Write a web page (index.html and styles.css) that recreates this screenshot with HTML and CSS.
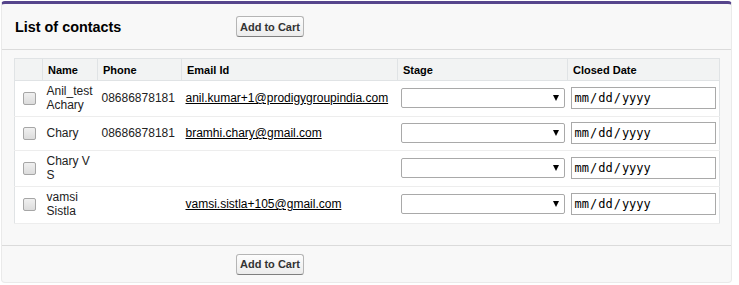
FILE: index.html
```html
<!DOCTYPE html>
<html lang="en">
<head>
  <meta charset="UTF-8" />
  <title>List of contacts</title>
  <link rel="stylesheet" href="styles.css">
</head>
<body>
  <div class="pb">
    <div class="pb-header">
      <h2 class="pb-title">List of contacts</h2>
      <button class="btn">Add to Cart</button>
    </div>

    <div class="pb-body">
      <table class="list">
        <colgroup>
          <col class="c-chk"><col class="c-name"><col class="c-phone">
          <col class="c-email"><col class="c-stage"><col class="c-date">
        </colgroup>
        <thead>
          <tr class="header-row">
            <th></th>
            <th>Name</th>
            <th>Phone</th>
            <th>Email Id</th>
            <th>Stage</th>
            <th>Closed Date</th>
          </tr>
        </thead>
        <tbody>
          <tr>
            <td class="chk"><input type="checkbox"></td>
            <td>Anil_test Achary</td>
            <td>08686878181</td>
            <td><a href="#">anil.kumar+1@prodigygroupindia.com</a></td>
            <td><span class="pick"><select></select></span></td>
            <td><div class="date">mm<span class="sep">/</span>dd<span class="sep">/</span>yyyy</div></td>
          </tr>
          <tr>
            <td class="chk"><input type="checkbox"></td>
            <td>Chary</td>
            <td>08686878181</td>
            <td><a href="#">bramhi.chary@gmail.com</a></td>
            <td><span class="pick"><select></select></span></td>
            <td><div class="date">mm<span class="sep">/</span>dd<span class="sep">/</span>yyyy</div></td>
          </tr>
          <tr>
            <td class="chk"><input type="checkbox"></td>
            <td>Chary V S</td>
            <td></td>
            <td></td>
            <td><span class="pick"><select></select></span></td>
            <td><div class="date">mm<span class="sep">/</span>dd<span class="sep">/</span>yyyy</div></td>
          </tr>
          <tr>
            <td class="chk"><input type="checkbox"></td>
            <td>vamsi Sistla</td>
            <td></td>
            <td><a href="#">vamsi.sistla+105@gmail.com</a></td>
            <td><span class="pick"><select></select></span></td>
            <td><div class="date">mm<span class="sep">/</span>dd<span class="sep">/</span>yyyy</div></td>
          </tr>
        </tbody>
      </table>
    </div>

    <div class="pb-footer">
      <button class="btn">Add to Cart</button>
    </div>
  </div>
</body>
</html>
```

FILE: styles.css
```css
* {
  box-sizing: border-box;
}
body {
  margin: 0;
  padding: 1px 0 0 1px;
  background: #fff;
  font-family: Arial, 'Liberation Sans', sans-serif;
  font-size: 12px;
  color: #222;
}
.pb {
  width: 731px;
  background: #f8f8f8;
  border: 1px solid #eaeaea;
  border-top: 3px solid #56458c;
  border-radius: 4px;
}
.pb-header {
  display: flex;
  align-items: center;
  height: 46px;
  border-bottom: 1px solid #dbdbdb;
}
.pb-title {
  margin: 0;
  width: 234px;
  padding-left: 13px;
  font-size: 14.4px;
  font-weight: bold;
  color: #000;
}
.btn {
  height: 21px;
  margin: 0;
  padding: 0 3px;
  font-family: Arial, 'Liberation Sans', sans-serif;
  font-size: 11px;
  font-weight: bold;
  color: #333;
  background: linear-gradient(#fdfdfd, #ececec);
  border: 1px solid #b5b5b5;
  border-bottom-color: #7f7f7f;
  border-radius: 3px;
}
.pb-body {
  padding: 8px 12px 21px;
}
.list {
  width: 705px;
  table-layout: fixed;
  border-collapse: collapse;
  background: #fff;
  border: 1px solid #e0e3e5;
}
.c-chk { width: 28px; }
.c-name { width: 55px; }
.c-phone { width: 84px; }
.c-email { width: 216px; }
.c-stage { width: 170px; }
.c-date { width: 152px; }
.header-row th {
  height: 22px;
  padding: 0 2px 0 5px;
  text-align: left;
  font-size: 11px;
  font-weight: bold;
  color: #000;
  background: #f2f3f3;
  border-left: 1px solid #e0e3e5;
  border-bottom: 1px solid #e0e3e5;
}
.header-row th:first-child {
  border-left: none;
}
.list td {
  padding: 3px 2px 4px 4px;
  line-height: 14px;
  vertical-align: middle;
  border-bottom: 1px solid #ededed;
}
.list tr:last-child td {
  padding-bottom: 5px;
}
.list td.chk {
  padding-left: 8px;
}
.list a {
  color: #000;
  text-decoration: underline;
}
input[type="checkbox"] {
  appearance: none;
  display: block;
  width: 13px;
  height: 13px;
  margin: 0;
  border: 1px solid #a6a6a6;
  border-radius: 2px;
  background: linear-gradient(#f0f0f0, #dcdcdc);
}
.pick {
  position: relative;
  display: block;
  width: 164px;
}
.pick select {
  appearance: none;
  display: block;
  width: 164px;
  height: 20px;
  margin: 0 0 0 -1px;
  background: #fff;
  border: 1px solid #a9a9a9;
  border-radius: 2px;
}
.pick::after {
  content: "";
  position: absolute;
  right: 7px;
  top: 7px;
  border-left: 3.5px solid transparent;
  border-right: 3.5px solid transparent;
  border-top: 6px solid #000;
}
.date {
  width: 145px;
  height: 22px;
  margin: 2px 0 2px -1px;
  padding: 0 0 0 3px;
  font-family: 'DejaVu Sans Mono', monospace;
  font-size: 12px;
  line-height: 20px;
  color: #000;
  background: #fff;
  border: 1px solid #a9a9a9;
}
.sep {
  margin: 0 1px;
}
.pb-footer {
  height: 37px;
  padding-left: 234px;
  display: flex;
  align-items: center;
  border-top: 1px solid #dbdbdb;
}
```
